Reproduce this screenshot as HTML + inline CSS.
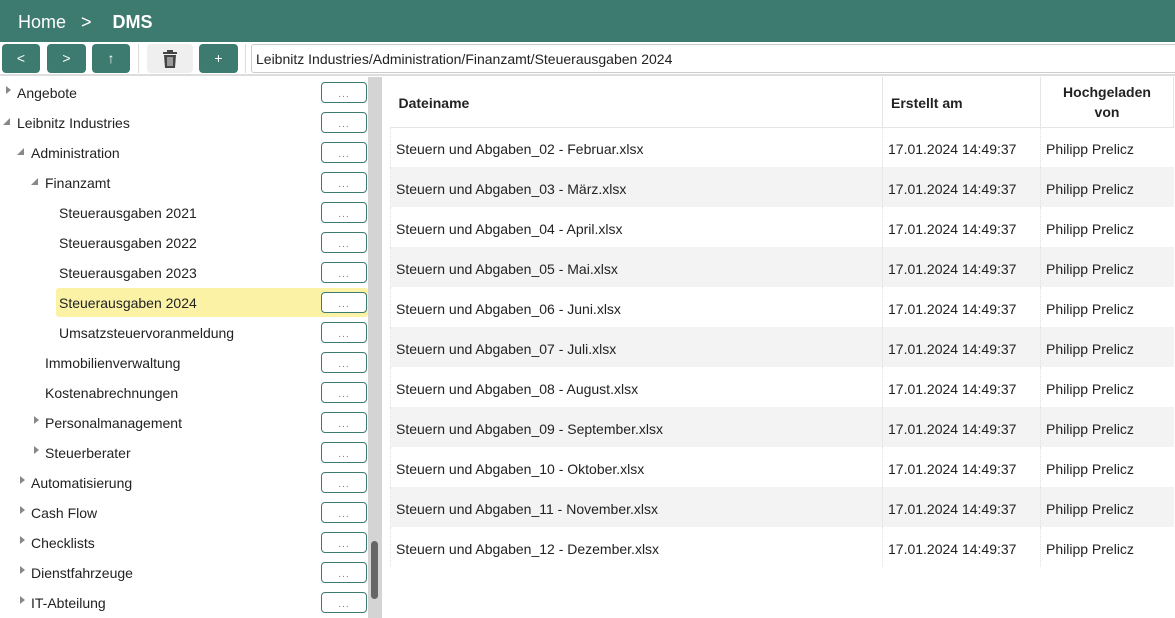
<!DOCTYPE html>
<html><head><meta charset="utf-8"><style>
*{box-sizing:border-box;margin:0;padding:0}
body{width:1175px;height:618px;overflow:hidden;background:#fff;font-family:"Liberation Sans",sans-serif;color:#222;position:relative}
.hdr{position:absolute;left:0;top:0;width:1175px;height:42px;background:#3d7a70;color:#fff;font-size:18px;line-height:44px;padding-left:18px}
.hdr b{margin-left:6px}
.btn{position:absolute;top:44px;height:29px;background:#3d7a70;color:#fff;border-radius:4px;text-align:center;line-height:29px;font-size:14px}
.sep{position:absolute;top:44px;width:1px;height:29px;background:#ddd}
.path{position:absolute;left:251px;top:44px;width:930px;height:29px;border:1px solid #ccc;border-radius:3px;font-size:14px;line-height:29px;padding-left:4px}
.hline{position:absolute;left:0;top:74px;width:1175px;height:2px;background:#ddd}
.row{position:absolute;left:0;width:368px;height:30px;font-size:14px;line-height:30px}
.row span{position:absolute;top:0}
.tri{position:absolute;top:8px;width:0;height:0}
.tc{border-top:4px solid transparent;border-bottom:4px solid transparent;border-left:5px solid #888}
.to{border-left:7px solid transparent;border-bottom:7px solid #888;top:10px}
.box{position:absolute;left:321px;top:4px;width:46px;height:21px;border:1.5px solid #3d7a70;border-radius:4px;font-size:10px;line-height:24px;text-align:center;color:#777;letter-spacing:1px}
.sb{position:absolute;left:368px;top:77px;width:14px;height:541px;background:#d4d4d4}
.th{position:absolute;left:371px;top:541px;width:7px;height:58px;background:#666;border-radius:4px}
table{position:absolute;left:390px;top:77px;border-collapse:collapse;font-size:14px}
td,th{height:40px;padding:4px 5px 0;text-align:left;border-left:1px dotted #e0e0e0}
th{height:50px;font-weight:bold;font-size:14px;border-left:1px solid #e5e5e5;border-bottom:1px solid #e5e5e5;padding:2px 0 0 8px}
tr:nth-child(odd) td{background:#f3f3f3}
</style></head><body>
<div class="hdr">Home &nbsp;&nbsp;&gt;&nbsp;&nbsp; <b>DMS</b></div>
<div class="btn" style="left:2px;width:38px">&lt;</div>
<div class="btn" style="left:47px;width:39px">&gt;</div>
<div class="btn" style="left:92px;width:38px">↑</div>
<div class="sep" style="left:138px"></div>
<div class="btn" style="left:147px;width:46px;background:#efefef">
<svg width="16" height="20" viewBox="0 0 16 20" style="margin-top:5px"><rect x="1" y="3" width="14" height="2" fill="#444"/><rect x="5" y="1" width="6" height="2" fill="#444"/><path d="M2 6h12l-1 13H3z" fill="#444"/><path d="M6 8v9M8 8v9M10 8v9" stroke="#efefef" stroke-width="1"/></svg></div>
<div class="btn" style="left:199px;width:39px">+</div>
<div class="sep" style="left:245px"></div>
<div class="path">Leibnitz Industries/Administration/Finanzamt/Steuerausgaben 2024</div>
<div class="hline"></div>

<div class="row" style="top:78px"><i class="tri tc" style="left:6px"></i><span style="left:17px">Angebote</span><div class="box">...</div></div>
<div class="row" style="top:108px"><i class="tri to" style="left:3px"></i><span style="left:17px">Leibnitz Industries</span><div class="box">...</div></div>
<div class="row" style="top:138px"><i class="tri to" style="left:17px"></i><span style="left:31px">Administration</span><div class="box">...</div></div>
<div class="row" style="top:168px"><i class="tri to" style="left:31px"></i><span style="left:45px">Finanzamt</span><div class="box">...</div></div>
<div class="row" style="top:198px"><span style="left:59px">Steuerausgaben 2021</span><div class="box">...</div></div>
<div class="row" style="top:228px"><span style="left:59px">Steuerausgaben 2022</span><div class="box">...</div></div>
<div class="row" style="top:258px"><span style="left:59px">Steuerausgaben 2023</span><div class="box">...</div></div>
<div class="row" style="top:288px"><div style="position:absolute;left:56px;top:0;width:312px;height:29px;background:#fbf2a5;border-radius:3px"></div><span style="left:59px">Steuerausgaben 2024</span><div class="box" style="background:#fff">...</div></div>
<div class="row" style="top:318px"><span style="left:59px">Umsatzsteuervoranmeldung</span><div class="box">...</div></div>
<div class="row" style="top:348px"><span style="left:45px">Immobilienverwaltung</span><div class="box">...</div></div>
<div class="row" style="top:378px"><span style="left:45px">Kostenabrechnungen</span><div class="box">...</div></div>
<div class="row" style="top:408px"><i class="tri tc" style="left:34px"></i><span style="left:45px">Personalmanagement</span><div class="box">...</div></div>
<div class="row" style="top:438px"><i class="tri tc" style="left:34px"></i><span style="left:45px">Steuerberater</span><div class="box">...</div></div>
<div class="row" style="top:468px"><i class="tri tc" style="left:20px"></i><span style="left:31px">Automatisierung</span><div class="box">...</div></div>
<div class="row" style="top:498px"><i class="tri tc" style="left:20px"></i><span style="left:31px">Cash Flow</span><div class="box">...</div></div>
<div class="row" style="top:528px"><i class="tri tc" style="left:20px"></i><span style="left:31px">Checklists</span><div class="box">...</div></div>
<div class="row" style="top:558px"><i class="tri tc" style="left:20px"></i><span style="left:31px">Dienstfahrzeuge</span><div class="box">...</div></div>
<div class="row" style="top:588px"><i class="tri tc" style="left:20px"></i><span style="left:31px">IT-Abteilung</span><div class="box">...</div></div>
<div class="sb"></div><div class="th"></div>

<table>
<tr><th style="width:492px;border-left:none">Dateiname</th><th style="width:158px">Erstellt am</th><th style="width:133px;text-align:center;line-height:20px;padding:0;border-right:1px solid #e5e5e5">Hochgeladen<br>von</th></tr>
<tr><td>Steuern und Abgaben_02 - Februar.xlsx</td><td>17.01.2024 14:49:37</td><td>Philipp Prelicz</td></tr>
<tr><td>Steuern und Abgaben_03 - März.xlsx</td><td>17.01.2024 14:49:37</td><td>Philipp Prelicz</td></tr>
<tr><td>Steuern und Abgaben_04 - April.xlsx</td><td>17.01.2024 14:49:37</td><td>Philipp Prelicz</td></tr>
<tr><td>Steuern und Abgaben_05 - Mai.xlsx</td><td>17.01.2024 14:49:37</td><td>Philipp Prelicz</td></tr>
<tr><td>Steuern und Abgaben_06 - Juni.xlsx</td><td>17.01.2024 14:49:37</td><td>Philipp Prelicz</td></tr>
<tr><td>Steuern und Abgaben_07 - Juli.xlsx</td><td>17.01.2024 14:49:37</td><td>Philipp Prelicz</td></tr>
<tr><td>Steuern und Abgaben_08 - August.xlsx</td><td>17.01.2024 14:49:37</td><td>Philipp Prelicz</td></tr>
<tr><td>Steuern und Abgaben_09 - September.xlsx</td><td>17.01.2024 14:49:37</td><td>Philipp Prelicz</td></tr>
<tr><td>Steuern und Abgaben_10 - Oktober.xlsx</td><td>17.01.2024 14:49:37</td><td>Philipp Prelicz</td></tr>
<tr><td>Steuern und Abgaben_11 - November.xlsx</td><td>17.01.2024 14:49:37</td><td>Philipp Prelicz</td></tr>
<tr><td>Steuern und Abgaben_12 - Dezember.xlsx</td><td>17.01.2024 14:49:37</td><td>Philipp Prelicz</td></tr>
</table>
</body></html>
